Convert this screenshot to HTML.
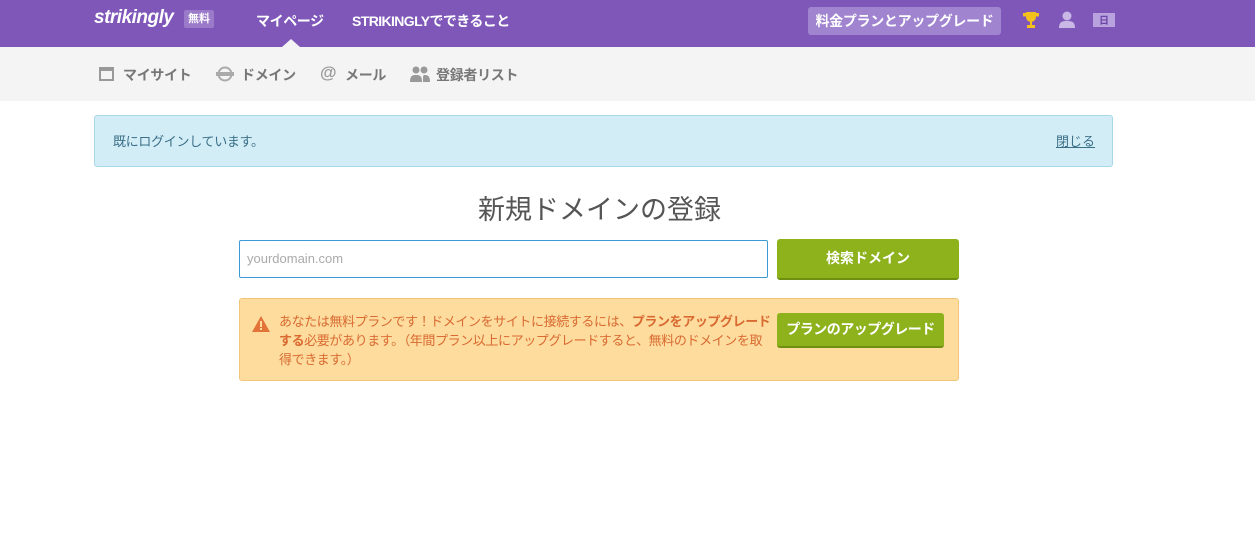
<!DOCTYPE html>
<html><head><meta charset="utf-8"><style>
*{box-sizing:border-box;margin:0;padding:0}
body{width:1255px;height:546px;background:#fff;font-family:"Liberation Sans","Noto Sans CJK JP",sans-serif;position:relative;overflow:hidden}
.top{position:absolute;left:0;top:0;width:1255px;height:47px;background:#7e57b8}
.abs{position:absolute;white-space:nowrap}
.sub{position:absolute;left:0;top:47px;width:1255px;height:54px;background:#f4f4f4}
.subi{position:absolute;top:65px;font-size:14px;font-weight:bold;color:#777;letter-spacing:-0.3px}
</style></head><body>
<div class="top">
 <div class="abs" style="left:94px;top:7px;font-size:19px;font-weight:bold;font-style:italic;color:#fff;letter-spacing:-0.5px">strikingly</div>
 <div class="abs" style="left:184px;top:10px;width:30px;height:18px;background:#9b7ac9;border-radius:2px;color:#fff;font-size:11px;font-weight:bold;text-align:center;line-height:18px">無料</div>
 <div class="abs" style="left:256px;top:11px;font-size:14px;font-weight:bold;color:#fff;letter-spacing:-0.4px">マイページ</div>
 <div class="abs" style="left:282px;top:39px;width:0;height:0;border-left:9px solid transparent;border-right:9px solid transparent;border-bottom:8px solid #f4f4f4"></div>
 <div class="abs" style="left:352px;top:11px;font-size:14px;font-weight:bold;color:#fff;letter-spacing:-0.6px">STRIKINGLYでできること</div>
 <div class="abs" style="left:808px;top:7px;width:193px;height:28px;background:#a084d0;border-radius:3px;color:#fff;font-size:14px;font-weight:bold;text-align:center;line-height:28px;letter-spacing:-0.3px">料金プランとアップグレード</div>
 <svg class="abs" style="left:1022px;top:11px" width="18" height="18" viewBox="0 0 18 18"><path d="M4 1h10v5a5 5 0 0 1-10 0z M1 2h3v3a2 2 0 0 1-3 0z M14 2h3v3a2 2 0 0 1-3 0z" fill="#f3c11a"/><rect x="8" y="10" width="2" height="4" fill="#f3c11a"/><rect x="5" y="14" width="8" height="3" fill="#f3c11a"/></svg>
 <svg class="abs" style="left:1058px;top:11px" width="18" height="17" viewBox="0 0 18 17"><circle cx="9" cy="5" r="4.5" fill="#c9b7e6"/><path d="M1 17c0-6 3-7 8-7s8 1 8 7z" fill="#c9b7e6"/></svg>
 <div class="abs" style="left:1093px;top:13px;width:22px;height:14px;background:#b9a3de;color:#6a44a6;font-size:10px;font-weight:bold;text-align:center;line-height:14px;font-family:'Noto Sans CJK JP',sans-serif">日</div>
</div>
<div class="sub"></div>
<svg class="abs" style="left:99px;top:67px" width="15" height="14" viewBox="0 0 15 14"><rect x="1" y="1" width="13" height="12" fill="none" stroke="#999" stroke-width="2"/><rect x="1" y="1" width="13" height="3" fill="#999"/></svg>
<div class="subi" style="left:123px">マイサイト</div>
<svg class="abs" style="left:216px;top:66px" width="18" height="16" viewBox="0 0 18 16"><circle cx="9" cy="8" r="6.5" fill="none" stroke="#aaa" stroke-width="2"/><rect x="0" y="6" width="18" height="4" fill="#aaa"/></svg>
<div class="subi" style="left:241px">ドメイン</div>
<div class="subi" style="left:320px;top:63px;font-size:17px;color:#999">@</div>
<div class="subi" style="left:345px">メール</div>
<svg class="abs" style="left:410px;top:66px" width="20" height="16" viewBox="0 0 20 16"><circle cx="6" cy="4" r="3.5" fill="#999"/><path d="M0 16c0-6 2-7 6-7s6 1 6 7z" fill="#999"/><circle cx="14" cy="4" r="3.5" fill="#999"/><path d="M13 16c0-5 0-7 1-7 4 0 6 1 6 7z" fill="#999"/></svg>
<div class="subi" style="left:436px">登録者リスト</div>

<div class="abs" style="left:94px;top:115px;width:1019px;height:52px;background:#d3edf7;border:1px solid #a8d8ea;border-radius:3px"></div>
<div class="abs" style="left:113px;top:131px;font-size:13px;color:#3a6f87;letter-spacing:-0.3px">既にログインしています。</div>
<div class="abs" style="left:1056px;top:131px;font-size:13px;color:#3a6f87;text-decoration:underline">閉じる</div>

<div class="abs" style="left:0;width:1199px;top:188px;text-align:center;font-size:27px;color:#555">新規ドメインの登録</div>
<div class="abs" style="left:239px;top:240px;width:529px;height:38px;border:1px solid #3a9bd5;border-radius:2px;background:#fff"></div>
<div class="abs" style="left:247px;top:251px;font-size:13px;color:#aaa">yourdomain.com</div>
<div class="abs" style="left:777px;top:239px;width:182px;height:41px;background:#8db21c;border-bottom:2px solid #6f8f10;border-radius:3px;color:#fff;font-size:14px;font-weight:bold;text-align:center;line-height:38px">検索ドメイン</div>

<div class="abs" style="left:239px;top:298px;width:720px;height:83px;background:#fddc9d;border:1px solid #f0c77a;border-radius:3px"></div>
<svg class="abs" style="left:252px;top:316px" width="18" height="16" viewBox="0 0 18 16"><path d="M9 0L18 16H0z" fill="#e2743a"/><rect x="8" y="5" width="2" height="6" fill="#fddc9d"/><rect x="8" y="12" width="2" height="2" fill="#fddc9d"/></svg>
<div class="abs" style="left:279px;top:312px;font-size:13px;line-height:19px;color:#d96a32;letter-spacing:-0.4px">あなたは無料プランです！ドメインをサイトに接続するには、<b>プランをアップグレード</b><br><b>する</b>必要があります。（年間プラン以上にアップグレードすると、無料のドメインを取<br>得できます。）</div>
<div class="abs" style="left:777px;top:313px;width:167px;height:35px;background:#8db21c;border-bottom:2px solid #6f8f10;border-radius:3px;color:#fff;font-size:14px;font-weight:bold;text-align:center;line-height:33px;letter-spacing:-0.5px">プランのアップグレード</div>
</body></html>
